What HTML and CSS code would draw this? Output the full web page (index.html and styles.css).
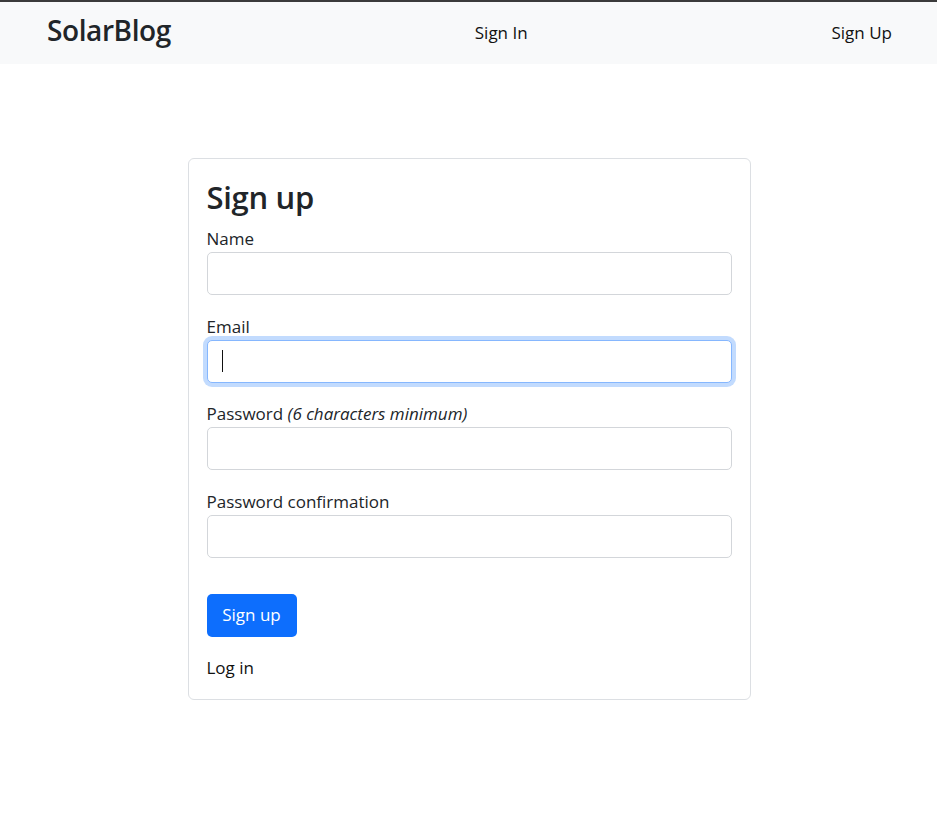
FILE: index.html
```html
<!DOCTYPE html>
<html lang="en">
<head>
<meta charset="utf-8">
<title>SolarBlog</title>
<link rel="stylesheet" href="styles.css">
</head>
<body>
<header class="topbar">
  <nav class="navbar">
    <a class="brand" href="#">SolarBlog</a>
    <a class="nav-link" href="#">Sign In</a>
    <a class="nav-link" href="#">Sign Up</a>
  </nav>
</header>
<main class="page">
  <section class="card">
    <h2 class="card-title">Sign up</h2>
    <form class="form">
      <div class="field">
        <label class="label" for="name">Name</label>
        <input class="input" id="name" type="text">
      </div>
      <div class="field">
        <label class="label" for="email">Email</label>
        <div class="input input-focus"><span class="caret"></span></div>
      </div>
      <div class="field">
        <label class="label" for="pw">Password <em>(6 characters minimum)</em></label>
        <input class="input" id="pw" type="password">
      </div>
      <div class="field">
        <label class="label" for="pwc">Password confirmation</label>
        <input class="input" id="pwc" type="password">
      </div>
      <div class="actions">
        <button class="btn" type="button">Sign up</button>
      </div>
    </form>
    <a class="login" href="#">Log in</a>
  </section>
</main>
</body>
</html>
```
FILE: styles.css
```css
* { box-sizing: border-box; }
html, body { margin: 0; padding: 0; }
body {
  font-family: "Open Sans", "Noto Sans", sans-serif;
  font-size: 17px;
  line-height: 26px;
  color: #212529;
  background: #fff;
}
a { text-decoration: none; color: #111; }

.topbar {
  border-top: 2px solid #3b3b3b;
  background: #f8f9fa;
}
.navbar {
  height: 62px;
  display: flex;
  align-items: center;
  justify-content: space-between;
  padding: 0 45px 0 47px;
}
.brand {
  font-size: 28px;
  font-weight: 600;
  letter-spacing: -0.4px;
  color: #212529;
  line-height: 34px;
  margin-top: -6px;
}
.nav-link {
  font-size: 17px;
  color: #111;
  margin-top: 0;
}

.page {
  display: flex;
  justify-content: center;
  padding: 94px 0 40px 1px;
}
.card {
  width: 563px;
  border: 1px solid #dcdfe3;
  border-radius: 6px;
  padding: 18px;
}
.card-title {
  margin: 0 0 9px 0;
  font-size: 31px;
  line-height: 40px;
  font-weight: 600;
  letter-spacing: -0.3px;
  color: #212529;
}
.form { display: flex; flex-direction: column; }
.field { display: flex; flex-direction: column; margin-bottom: 18.6px; }
.label { display: block; line-height: 26px; margin-bottom: 0; }
.label em { font-style: italic; }
.input {
  display: block;
  width: 100%;
  height: 43px;
  border: 1px solid #d3d6da;
  border-radius: 5px;
  background: #fff;
  font: inherit;
  padding: 0 13px;
}
.input-focus {
  border-color: #86b7fe;
  box-shadow: 0 0 0 4px rgba(13, 110, 253, 0.25);
  display: flex;
  align-items: center;
}
.caret {
  width: 1px;
  height: 22px;
  background: #111;
  margin-left: 1px;
}
.actions { padding-top: 17.6px; }
.btn {
  height: 43px;
  width: 90px;
  border: none;
  border-radius: 5px;
  background: #0d6efd;
  color: #fff;
  font: inherit;
  font-size: 17px;
  padding: 0;
}
.login {
  display: block;
  margin-top: 18px;
  line-height: 26px;
}
```
